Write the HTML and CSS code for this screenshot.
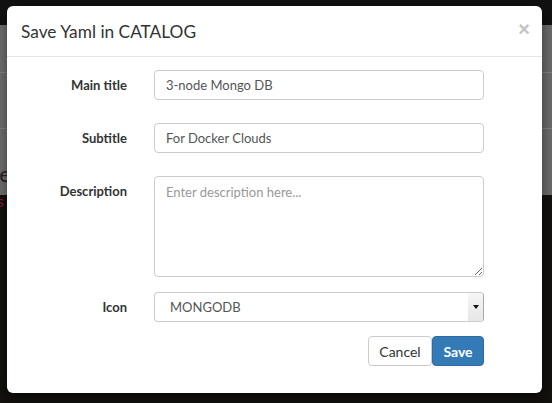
FILE: index.html
```html
<!DOCTYPE html>
<html>
<head>
<meta charset="utf-8">
<link rel="stylesheet" href="styles.css">
</head>
<body>
<div class="page">
  <div class="topbar"></div>
  <div class="band">
    <div class="band-row"></div>
    <div class="band-row"></div>
    <div class="band-row band-last"><span class="page-title">ge</span></div>
  </div>
  <div class="dark"><span class="page-sub">s</span></div>
</div>

<div class="modal">
  <div class="modal-header">
    <h4 class="modal-title">Save Yaml in CATALOG</h4>
    <span class="close">×</span>
  </div>
  <div class="modal-body">
    <div class="form">
      <label class="lbl">Main title</label>
      <input class="ctrl" type="text" value="3-node Mongo DB">

      <label class="lbl">Subtitle</label>
      <input class="ctrl" type="text" value="For Docker Clouds">

      <label class="lbl">Description</label>
      <textarea class="ctrl area" placeholder="Enter description here..."></textarea>

      <label class="lbl lbl-icon">Icon</label>
      <div class="ctrl select"><span class="select-text">MONGODB</span><span class="select-arrow"><span class="tri"></span></span></div>

      <div class="footer">
        <button class="btn btn-default">Cancel</button>
        <button class="btn btn-primary">Save</button>
      </div>
    </div>
  </div>
</div>
</body>
</html>
```
FILE: styles.css
```css
* { box-sizing: border-box; }
html, body { margin: 0; padding: 0; }
body {
  width: 552px;
  height: 403px;
  overflow: hidden;
  background: #12110e;
  font-family: "Lato", "Open Sans", sans-serif;
  position: relative;
}
.page { display: flex; flex-direction: column; height: 403px; }
.topbar { height: 25px; background: #111; }
.band { height: 170px; background: linear-gradient(90deg, #727272, #6c6c6c 50%, #6e6e6e); display: flex; flex-direction: column; }
.band-row { height: 48px; border-bottom: 1px solid #858585; }
.band-row:nth-child(2) { height: 56px; }
.band-last { flex: 1; border-bottom: none; display: flex; align-items: flex-end; padding-bottom: 10px; }
.page-title { font-size: 22px; color: #222; margin-left: -12px; line-height: 1; }
.dark { flex: 1; background: #12110e; }
.page-sub { display: block; color: #8a1c40; font-size: 16px; margin-left: -3px; margin-top: -2px; line-height: 1; }

.modal {
  position: absolute;
  left: 7px;
  top: 6px;
  width: 535px;
  height: 387px;
  background: #fff;
  border-radius: 6px;
  box-shadow: 0 5px 15px rgba(0,0,0,.5);
}
.modal-header {
  height: 51px;
  padding: 0 12px 0 14px;
  border-bottom: 1px solid #e5e5e5;
  display: flex;
  justify-content: space-between;
  align-items: center;
}
.modal-title { margin: 0; font-size: 17.3px; font-weight: 400; color: #333; }
.close { font-size: 20px; color: #c4c4c4; font-weight: 700; font-family: "Liberation Sans", sans-serif; line-height: 1; margin-top: -4px; }

.modal-body { padding: 13px 0 0 0; }
.form {
  display: grid;
  grid-template-columns: 120px 330px;
  column-gap: 27px;
  row-gap: 23px;
}
.lbl {
  text-align: right;
  font-size: 13px;
  font-weight: 700;
  color: #333;
  padding-top: 7px;
  line-height: 16px;
}
.ctrl {
  height: 30px;
  border: 1px solid #ccc;
  border-radius: 4px;
  padding: 0 11px;
  font-family: inherit;
  font-size: 13px;
  color: #555;
  width: 330px;
  margin: 0;
  outline: none;
}
.area { height: 101px; padding-top: 7px; resize: vertical; margin-bottom: -8px; }
.area::placeholder { color: #999; }
.select { display: flex; align-items: center; justify-content: space-between; padding: 0 0 0 15px; overflow: hidden; border-right-color: #aaa; }
.select-arrow { width: 15px; height: 28px; background: linear-gradient(#f6f6f6, #e6e6e6); display: flex; align-items: center; justify-content: center; }
.tri { width: 0; height: 0; border-left: 3px solid transparent; border-right: 3px solid transparent; border-top: 4px solid #111; }
.footer { grid-column: 2; display: flex; justify-content: flex-end; margin-top: -9px; }
.btn {
  height: 30px;
  font-family: inherit;
  font-size: 14px;
  border-radius: 4px;
  margin: 0;
  cursor: pointer;
}
.btn-default { width: 64px; background: #fff; border: 1px solid #ccc; color: #333; }
.btn-primary { width: 52px; background: #337ab7; border: 1px solid #2e6da4; color: #fff; font-weight: 700; }
```
